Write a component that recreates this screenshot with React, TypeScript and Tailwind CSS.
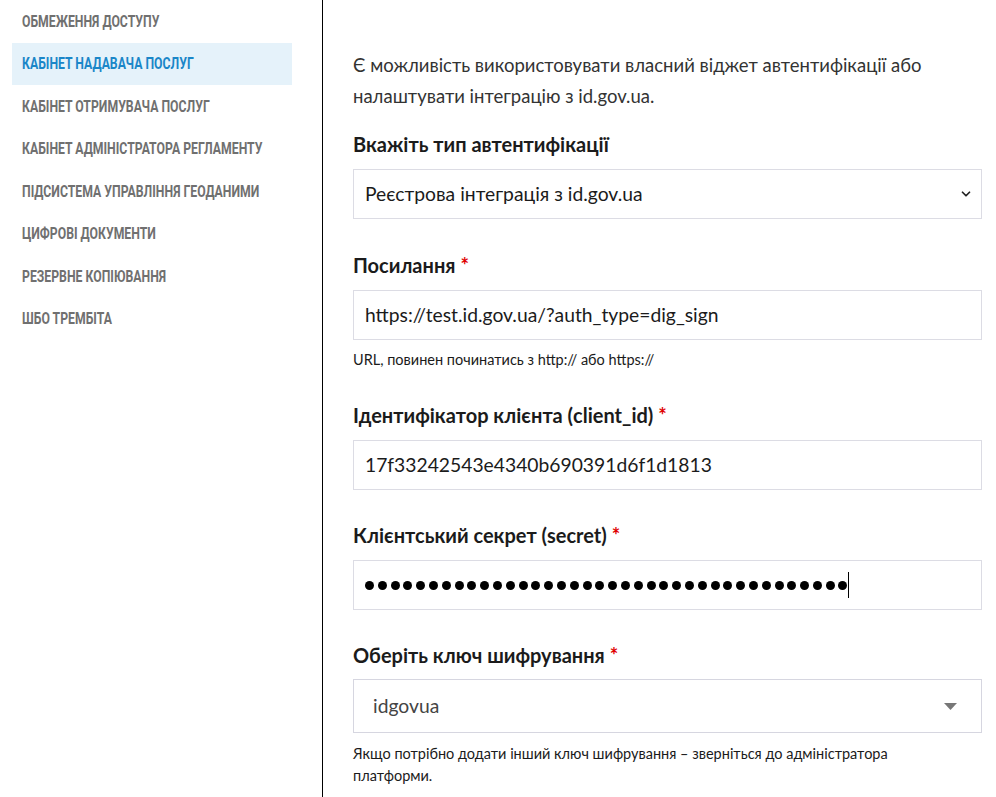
import { ChevronDown } from 'lucide-react'

const navItems = [
  'Обмеження доступу',
  'Кабінет надавача послуг',
  'Кабінет отримувача послуг',
  'Кабінет адміністратора регламенту',
  'Підсистема управління геоданими',
  'Цифрові документи',
  'Резервне копіювання',
  'ШБО Трембіта',
]

const ACTIVE = 1

function Label({ text, required }: { text: string; required?: boolean }) {
  return (
    <div className="text-[20px] leading-[26px] font-bold text-[#1b1b1b]">
      {text}
      {required && <span className="text-[#e00000] ml-[5px]">*</span>}
    </div>
  )
}

function TextBox({ value }: { value: string }) {
  return (
    <div className="mt-[12px] h-[50px] border border-[#dcdce4] flex items-center px-[11px] text-[19.3px] text-[#1b1b1b]">
      {value}
    </div>
  )
}

export default function App() {
  return (
    <div className="flex min-h-[797px] bg-white" style={{ fontFamily: 'Lato, "Noto Sans", sans-serif' }}>
      <aside className="w-[323px] shrink-0 border-r border-black pl-[12px] pr-[30px]">
        <ul style={{ fontFamily: 'Roboto, "DejaVu Sans", sans-serif' }}>
          {navItems.map((item, i) => (
            <li
              key={item}
              className={`h-[42.5px] flex items-center pl-[10px] uppercase font-bold text-[17px] whitespace-nowrap ${
                i === ACTIVE ? 'bg-[#e5f2fa] text-[#1a86c8]' : 'text-[#707070]'
              }`}
            >
              <span className="inline-block origin-left scale-x-[0.72]">{item}</span>
            </li>
          ))}
        </ul>
      </aside>

      <main className="flex-1 pl-[30px] pr-[14px] pt-[50px]">
        <p className="text-[18.5px] leading-[31px] text-[#333]">
          Є можливість використовувати власний віджет автентифікації або налаштувати інтеграцію з id.gov.ua.
        </p>

        <div className="mt-[19px]">
          <Label text="Вкажіть тип автентифікації" />
          <div className="mt-[12px] h-[50px] border border-[#dcdce4] flex items-center justify-between pl-[11px] pr-[8px] text-[19.3px] text-[#1b1b1b]">
            <span>Реєстрова інтеграція з id.gov.ua</span>
            <ChevronDown className="w-[14px] h-[14px] text-[#222]" strokeWidth={3} />
          </div>
        </div>

        <div className="mt-[33px]">
          <Label text="Посилання" required />
          <TextBox value="https://test.id.gov.ua/?auth_type=dig_sign" />
          <div className="mt-[9px] text-[14.5px] leading-[22px] text-[#1b1b1b]">
            URL, повинен починатись з http:// або https://
          </div>
        </div>

        <div className="mt-[31px]">
          <Label text="Ідентифікатор клієнта (client_id)" required />
          <TextBox value="17f33242543e4340b690391d6f1d1813" />
        </div>

        <div className="mt-[32px]">
          <Label text="Клієнтський секрет (secret)" required />
          <div className="mt-[12px] h-[50px] border border-[#dcdce4] flex items-center px-[11px]">
            <div className="flex items-center gap-[3.8px]">
              {Array.from({ length: 38 }).map((_, i) => (
                <span key={i} className="w-[9px] h-[9px] rounded-full bg-black" />
              ))}
            </div>
            <span className="ml-[1px] w-px h-[26px] bg-black" />
          </div>
        </div>

        <div className="mt-[32px]">
          <Label text="Оберіть ключ шифрування" required />
          <div className="mt-[11px] h-[54px] border border-[#d6d6e0] flex items-center justify-between pl-[19px] pr-[24px] text-[19.3px] text-[#444]">
            <span>idgovua</span>
            <svg width="13" height="7" viewBox="0 0 13 7">
              <path d="M0 0h13L6.5 7z" fill="#777" />
            </svg>
          </div>
          <div className="mt-[10px] text-[14.5px] leading-[22px] text-[#1b1b1b] max-w-[560px]">
            Якщо потрібно додати інший ключ шифрування – зверніться до адміністратора платформи.
          </div>
        </div>
      </main>
    </div>
  )
}
